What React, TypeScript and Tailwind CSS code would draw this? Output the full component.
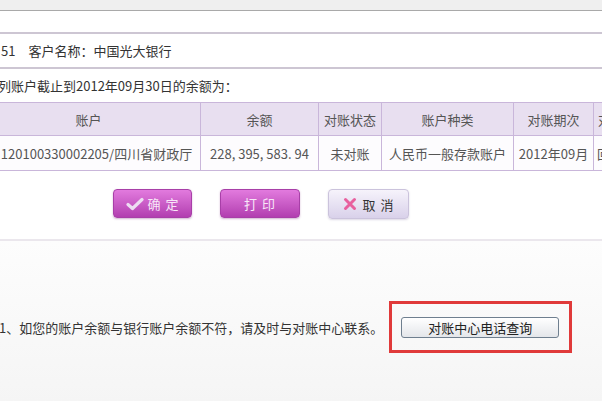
import React from "react";

const font = "font-['SimSun','Noto_Sans_CJK_SC',sans-serif]";

function Check() {
  return (
    <svg width="18" height="14" viewBox="0 0 18 14">
      <path d="M2 7.5 L6.5 11.5 L16 2.5" fill="none" stroke="#eddcf2" strokeWidth="3.2" strokeLinecap="round" strokeLinejoin="round" />
    </svg>
  );
}

function Cross() {
  return (
    <svg width="14" height="14" viewBox="0 0 14 14">
      <path d="M2.5 2.5 L11.5 11.5 M11.5 2.5 L2.5 11.5" fill="none" stroke="#e8609e" strokeWidth="3" strokeLinecap="round" />
    </svg>
  );
}

export default function App() {
  return (
    <div className={`w-[602px] h-[401px] overflow-hidden bg-white text-[13px] leading-none text-[#333] ${font}`}>
      <div className="h-[10px] bg-[#efefef]" />
      <div className="h-px bg-[#a9a9a9]" />
      <div className="h-[21px] bg-white" />
      <div className="h-[2px] bg-[#cdc6d3]" />
      <div className="h-[33px] flex items-center">
        <span className="ml-[1px]">51</span>
        <span className="ml-[13px]">客户名称：中国光大银行</span>
      </div>
      <div className="h-[2px] bg-[#cdc6d3]" />
      <div className="h-[33px] flex items-center">
        <span className="-ml-[2px] whitespace-nowrap">列账户截止到2012年09月30日的余额为：</span>
      </div>
      <table className="-ml-[24px] w-[697px] max-w-none border-collapse table-fixed text-[#555]">
        <colgroup>
          <col className="w-[224px]" />
          <col className="w-[118px]" />
          <col className="w-[63px]" />
          <col className="w-[132px]" />
          <col className="w-[80px]" />
          <col className="w-[80px]" />
        </colgroup>
        <thead>
          <tr className="h-[33px] bg-[#e8dff0]">
            <th className="border border-[#c9b6da] font-normal text-center whitespace-nowrap">账户</th>
            <th className="border border-[#c9b6da] font-normal text-center whitespace-nowrap">余额</th>
            <th className="border border-[#c9b6da] font-normal text-center whitespace-nowrap">对账状态</th>
            <th className="border border-[#c9b6da] font-normal text-center whitespace-nowrap">账户种类</th>
            <th className="border border-[#c9b6da] font-normal text-center whitespace-nowrap">对账期次</th>
            <th className="border border-[#c9b6da] font-normal text-left pl-[4px] whitespace-nowrap">对账结果</th>
          </tr>
        </thead>
        <tbody>
          <tr className="h-[35px] bg-[#fdfcfe]">
            <td className="border border-[#c9b6da] text-center pl-[16px] whitespace-nowrap">120100330002205/四川省财政厅</td>
            <td className="border border-[#c9b6da] text-center whitespace-nowrap">228, 395, 583. 94</td>
            <td className="border border-[#c9b6da] text-center whitespace-nowrap">未对账</td>
            <td className="border border-[#c9b6da] text-center whitespace-nowrap">人民币一般存款账户</td>
            <td className="border border-[#c9b6da] text-center whitespace-nowrap">2012年09月</td>
            <td className="border border-[#c9b6da] text-left pl-[3px] whitespace-nowrap">回复</td>
          </tr>
        </tbody>
      </table>
      <div className="flex mt-[18px] ml-[113px] gap-[28px]">
        <button className="w-[79px] h-[29px] rounded-[4px] border border-[#a83fa8] bg-gradient-to-b from-[#e27ade] to-[#b23eb0] shadow-[0_1px_2px_rgba(120,40,120,0.35)] flex items-center justify-center gap-[4px] text-[#f8e6f8] tracking-[1px]">
          <Check />
          <span>确 定</span>
        </button>
        <button className="w-[80px] h-[29px] rounded-[4px] border border-[#a83fa8] bg-gradient-to-b from-[#e27ade] to-[#b23eb0] shadow-[0_1px_2px_rgba(120,40,120,0.35)] flex items-center justify-center text-[#f8e6f8] tracking-[1px]">
          打 印
        </button>
        <button className="w-[81px] h-[30px] rounded-[4px] border border-[#cbc3dc] bg-gradient-to-b from-[#f6f3fb] to-[#d9d1ea] shadow-[0_1px_2px_rgba(120,100,150,0.25)] flex items-center justify-center gap-[6px] text-[#333] tracking-[1px]">
          <Cross />
          <span>取 消</span>
        </button>
      </div>
      <div className="mt-[20px] h-[2px] bg-[#ebe7ed]" />
      <div className="h-[162px] bg-gradient-to-b from-[#fdfdfd] to-[#f5f5f5] pt-[60px]">
        <div className="flex items-center h-[52px]">
          <span className="-ml-[1px] whitespace-nowrap">1、如您的账户余额与银行账户余额不符，请及时与对账中心联系。</span>
          <div className="ml-[6px] w-[183px] h-[52px] border-[3px] border-[#e03a3a] flex items-center pl-[9px]">
            <button className="w-[158px] h-[21px] rounded-[3px] border border-[#6f7f8f] bg-gradient-to-b from-[#ffffff] to-[#e4e6ea] text-[#222] flex items-center justify-center">
              对账中心电话查询
            </button>
          </div>
        </div>
      </div>
    </div>
  );
}
